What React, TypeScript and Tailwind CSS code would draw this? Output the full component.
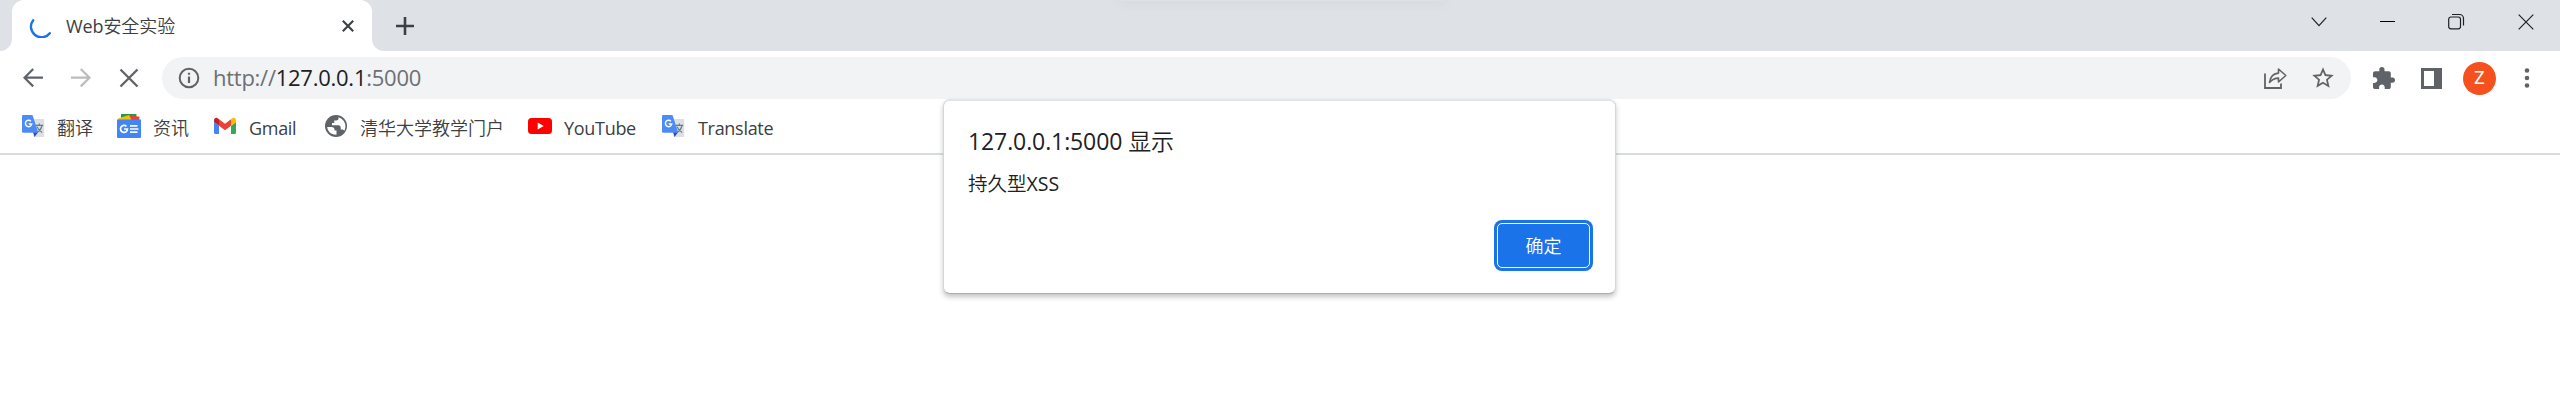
import React from 'react';

const FONT = "font-['Open_Sans','Noto_Sans_CJK_SC',sans-serif]";

function TranslateIcon() {
  return (
    <svg viewBox="0 0 24 24" className="block h-6 w-6 shrink-0">
      <path d="M8 5h13.200a1 1 0 0 1 1 1v16a1 1 0 0 1-1 1H12z" fill="#dedfe1" />
      <path d="M13.600 11.300h7.600M17.300 9.600v1.700M20 11.400c-.6 3.300-2.600 5.700-5 7.200M15 12.600c1 2.600 3 4.600 5.200 6" stroke="#607d8b" strokeWidth="1.200" fill="none" />
      <path d="M11 18h5.200L12.600 23z" fill="#3949ab" />
      <path d="M1.300 1h9.200l5.800 17.800H1.300A1.300 1.300 0 0 1 0 17.500V2.300A1.300 1.300 0 0 1 1.300 1z" fill="#4c8bf5" />
      <path d="M8.900 7.200A3.200 3.200 0 1 0 9.800 10H6.700" stroke="#fff" strokeWidth="1.400" fill="none" />
    </svg>
  );
}

function NewsIcon() {
  return (
    <svg viewBox="0 0 24 24" className="block h-6 w-6 shrink-0">
      <path d="M4 0h15.500v6H4z" fill="#1e9e4a" />
      <path d="M13 1.200l9.500 1.500L22 8H13z" fill="#ea4335" />
      <path d="M1 4.500L12 1l2.500 5H1z" fill="#fbbc04" />
      <path d="M0 5.500h24V23a1 1 0 0 1-1 1H1a1 1 0 0 1-1-1z" fill="#4285f4" />
      <path d="M9.500 12.400A3.500 3.500 0 1 0 10.500 15H7" stroke="#fff" strokeWidth="1.700" fill="none" />
      <path d="M13 11.800h7.500M13 15h8.500M13 18.200h7.500" stroke="#fff" strokeWidth="1.700" />
    </svg>
  );
}

function GmailIcon() {
  return (
    <svg viewBox="0 0 24 24" className="block h-6 w-6 shrink-0">
      <path d="M0 8l5 3.700V20H1.500A1.500 1.500 0 0 1 0 18.500z" fill="#4285f4" />
      <path d="M17 11.700L22 8v10.500a1.500 1.500 0 0 1-1.500 1.500H17z" fill="#34a853" />
      <path d="M5 5.200l6 4.500 6-4.500v6.600l-6 4.500-6-4.500z" fill="#ea4335" />
      <path d="M17 5.200l1.400-1.050C19.900 3 22 4.100 22 6v2.100l-5 3.700z" fill="#fbbc04" />
      <path d="M5 5.200L3.600 4.150C2.100 3 0 4.100 0 6v2.100l5 3.700z" fill="#c5221f" />
    </svg>
  );
}

function GlobeIcon() {
  return (
    <svg viewBox="0 0 24 24" className="block h-6 w-6 shrink-0">
      <circle cx="11" cy="12" r="11" fill="#5f6368" />
      <path d="M2.200 13h4.300c1.900 0 3 .9 3 2.500v1h2v4.200C6.500 21 2.500 17.500 2.200 13z" fill="#fff" />
      <path d="M13.500 3.300v1.200c0 1.200-.9 2-2.200 2H9.200V9H7v2.200h6.500c1.300 0 2.200 1 2.200 2.200v2.100h1.500c1 0 1.800.6 2 1.400 2.800-4.400 1-11.400-5.700-13.600z" fill="#fff" />
    </svg>
  );
}

function YouTubeIcon() {
  return (
    <svg viewBox="0 0 24 24" className="block h-6 w-6 shrink-0">
      <rect x="0" y="4" width="24" height="16" rx="3.500" fill="#f00" />
      <path d="M9.700 8.600v6.800l6-3.400z" fill="#fff" />
    </svg>
  );
}

type Bookmark = { label: string; icon: React.ReactNode; box: string; text: string };

const bookmarks: Bookmark[] = [
  { label: '翻译', icon: <TranslateIcon />, box: 'w-[95px]', text: 'ml-[11px] font-[350]' },
  { label: '资讯', icon: <NewsIcon />, box: 'w-[97px]', text: 'ml-[12px] font-[350]' },
  { label: 'Gmail', icon: <GmailIcon />, box: 'w-[111px]', text: 'ml-[11px] tracking-[-0.3px]' },
  { label: '清华大学教学门户', icon: <GlobeIcon />, box: 'w-[203px]', text: 'ml-[11px] font-[350]' },
  { label: 'YouTube', icon: <YouTubeIcon />, box: 'w-[134px]', text: 'ml-[12px] tracking-[-0.3px]' },
  { label: 'Translate', icon: <TranslateIcon />, box: 'w-[130px]', text: 'ml-[12px] tracking-[-0.3px]' },
];

function TabStrip() {
  return (
    <div className="flex h-[51px] items-start overflow-hidden bg-[#dee1e6]">
      <svg viewBox="0 0 12 51" className="block h-[51px] w-3 shrink-0">
        <path d="M12 39A12 12 0 0 1 0 51h12z" fill="#fff" />
      </svg>
      <div className="flex h-[51px] w-[360px] items-center rounded-t-[12px] bg-white">
        <svg viewBox="0 0 24 24" className="ml-[17px] block h-6 w-6 shrink-0">
          <path d="M4.200 6.200A9.500 9.500 0 0 0 20.800 19.200" fill="none" stroke="#1a73e8" strokeWidth="2.400" strokeLinecap="round" />
        </svg>
        <span className="ml-[13px] w-[276px] text-[18px] leading-6 tracking-[-0.1px] text-[#3c4043]">
          Web<span className="font-[350]">安全实验</span>
        </span>
        <svg viewBox="0 0 12 12" className="block h-3 w-3 shrink-0">
          <path d="M.8.800l10.400 10.400M11.200.8.800 11.200" stroke="#3c4043" strokeWidth="2.100" />
        </svg>
      </div>
      <svg viewBox="0 0 12 51" className="block h-[51px] w-3 shrink-0">
        <path d="M0 39A12 12 0 0 0 12 51H0z" fill="#fff" />
      </svg>
      <svg viewBox="0 0 18 18" className="mt-[17px] ml-3 block h-[18px] w-[18px] shrink-0">
        <path d="M9 0v18M0 9h18" stroke="#3c4043" strokeWidth="2.600" />
      </svg>
      <div className="ml-[706px] h-px w-[324px] shrink-0 rounded-full shadow-[0_-1px_12px_2px_rgba(60,64,67,0.08)]" />
      <div className="mt-[13px] mr-[26px] ml-auto flex h-[17px] items-center">
        <svg viewBox="0 0 16 10" className="block h-[10px] w-4">
          <path d="M.7.700L8 8.700 15.300.7" fill="none" stroke="#202124" strokeWidth="1.200" />
        </svg>
        <div className="ml-[53px] h-px w-[15px] bg-black" />
        <svg viewBox="0 0 17 17" className="ml-[53px] block h-[17px] w-[17px]">
          <rect x=".7" y="4" width="11.800" height="11.800" rx="2.200" fill="none" stroke="#202124" strokeWidth="1.200" />
          <path d="M4 1.500h7.500a4 4 0 0 1 4 4v7" fill="none" stroke="#202124" strokeWidth="1.200" />
        </svg>
        <svg viewBox="0 0 16 16" className="ml-[53px] block h-4 w-4">
          <path d="M.7.700l14.600 14.600M15.300.7.700 15.300" stroke="#202124" strokeWidth="1.200" />
        </svg>
      </div>
    </div>
  );
}

function Toolbar() {
  return (
    <div className="flex h-[54px] items-center">
      <svg viewBox="0 0 20 20" className="ml-[23px] block h-5 w-5 shrink-0">
        <path d="M20 9.700H1.500M10.200 1 1.500 9.700l8.700 8.700" fill="none" stroke="#5f6368" strokeWidth="2.200" />
      </svg>
      <svg viewBox="0 0 20 20" className="ml-[28px] block h-5 w-5 shrink-0">
        <path d="M0 9.700h18.500M9.800 1l8.700 8.700-8.700 8.700" fill="none" stroke="#babcbe" strokeWidth="2.200" />
      </svg>
      <svg viewBox="0 0 20 20" className="ml-[28px] block h-5 w-5 shrink-0">
        <path d="M1.500 1.500l17 17M18.500 1.500l-17 17" stroke="#5f6368" strokeWidth="2.300" />
      </svg>
      <div className="ml-[23px] flex h-[42px] w-[2189px] shrink-0 items-center rounded-full bg-[#f1f3f4]">
        <svg viewBox="0 0 22 22" className="ml-[16px] block h-[22px] w-[22px] shrink-0">
          <circle cx="11" cy="11" r="9.300" fill="none" stroke="#5f6368" strokeWidth="2" />
          <path d="M11 9.600v6.400M11 5.800v2" stroke="#5f6368" strokeWidth="2.200" />
        </svg>
        <span className="mb-[2px] ml-[13px] text-[22px] leading-7 tracking-[-0.260px] whitespace-nowrap text-[#6c7074]">
          http://<span className="text-[#202124]">127.0.0.1</span>:5000
        </span>
        <svg viewBox="0 0 23 22" className="ml-auto block h-[22px] w-[23px] shrink-0">
          <path d="M1 6.500V21h16v-4.500" fill="none" stroke="#5f6368" strokeWidth="1.800" />
          <path d="M5.500 15.500C6.500 9 10 6.300 14.500 6.100V2l7.300 6.500-7.300 6.500v-3.900c-4 0-6.500 1.400-9 4.400z" fill="none" stroke="#5f6368" strokeWidth="1.600" strokeLinejoin="round" />
        </svg>
        <svg viewBox="1.800 1.800 20.400 20.400" className="mr-[17px] ml-[25px] block h-[22px] w-[22px] shrink-0">
          <path d="M22 9.240l-7.190-.62L12 2 9.190 8.630 2 9.240l5.460 4.730L5.820 21 12 17.270 18.180 21l-1.630-7.030L22 9.240zM12 15.400l-3.760 2.270 1-4.280-3.320-2.880 4.380-.38L12 6.100l1.710 4.040 4.380.38-3.320 2.880 1 4.280L12 15.400z" fill="#5f6368" />
        </svg>
      </div>
      <svg viewBox="2 1 21 21" className="ml-[22px] block h-[22px] w-[22px] shrink-0">
        <path d="M20.500 11H19V7c0-1.100-.9-2-2-2h-4V3.500a2.500 2.500 0 0 0-5 0V5H4c-1.100 0-1.990.9-1.990 2v3.800H3.500c1.490 0 2.700 1.210 2.700 2.700s-1.210 2.700-2.700 2.700H2V20c0 1.100.9 2 2 2h3.800v-1.500c0-1.490 1.210-2.700 2.700-2.700s2.700 1.210 2.700 2.700V22H17c1.100 0 2-.9 2-2v-4h1.500a2.500 2.500 0 0 0 0-5z" fill="#5f6368" />
      </svg>
      <div className="ml-[26px] flex h-[21px] w-[21px] shrink-0 items-stretch bg-[#5f6368] p-[3px]">
        <div className="w-[10px] bg-white" />
      </div>
      <div className="ml-[21px] flex h-[33px] w-[33px] shrink-0 items-center justify-center rounded-full bg-[#f4511e] font-[Roboto,sans-serif] text-[18px] leading-none text-white">
        Z
      </div>
      <svg viewBox="0 0 6 20" className="ml-[28px] block h-5 w-[6px] shrink-0">
        <circle cx="3" cy="2.500" r="2.300" fill="#5f6368" />
        <circle cx="3" cy="10" r="2.300" fill="#5f6368" />
        <circle cx="3" cy="17.500" r="2.300" fill="#5f6368" />
      </svg>
    </div>
  );
}

function BookmarksBar() {
  return (
    <div className="flex h-[50px] items-center border-b-2 border-[#dadbdd] pb-[6px] pl-[22px]">
      {bookmarks.map((b) => (
        <div key={b.label} className={`flex shrink-0 items-center ${b.box}`}>
          {b.icon}
          <span className={`-mb-[3px] text-[18px] leading-6 whitespace-nowrap text-[#3c4043] ${b.text}`}>{b.label}</span>
        </div>
      ))}
    </div>
  );
}

function AlertDialog() {
  return (
    <div className="absolute top-[99px] left-[943px] flex h-[195px] w-[673px] flex-col rounded-[7px] border border-t-2 border-[#d5d6d8] border-t-[#e3e4e6] border-b-[#aaadae] bg-white pr-[25px] pl-[24px] shadow-[0_3px_5px_rgba(60,64,67,0.3)]">
      <h1 className="mt-[24px] text-[23px] leading-8 tracking-[-0.1px] text-[#202124]">
        127.0.0.1:5000 <span className="font-[350]">显示</span>
      </h1>
      <p className="mt-[13px] text-[19.500px] leading-7 text-[#202124]">
        <span className="font-[350]">持久型</span>XSS
      </p>
      <button className="mt-[22px] mr-[-3px] ml-auto flex h-[51px] w-[99px] shrink-0 items-center justify-center rounded-[8px] bg-[#1a73e8] p-[3px]">
        <span className="flex h-full w-full items-center justify-center rounded-[5px] border-[1.500px] border-white text-[18px] leading-6 font-[350] text-white">确定</span>
      </button>
    </div>
  );
}

export default function App() {
  return (
    <div className={`relative h-[415px] w-[2560px] overflow-hidden bg-white ${FONT}`}>
      <TabStrip />
      <Toolbar />
      <BookmarksBar />
      <AlertDialog />
    </div>
  );
}
